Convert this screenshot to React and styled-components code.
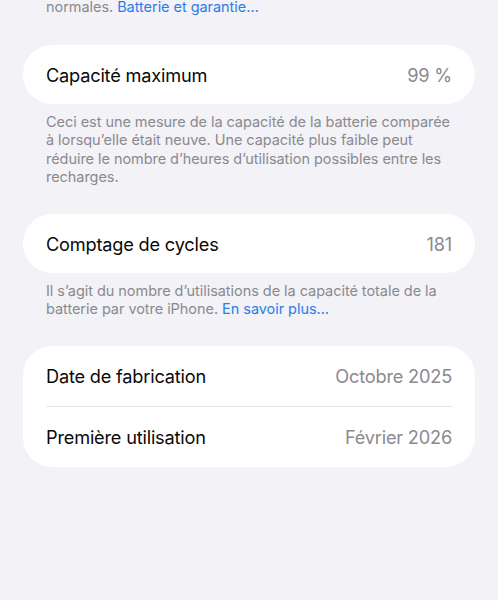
import React from "react"
import styled, { createGlobalStyle } from "styled-components"

const GlobalStyle = createGlobalStyle`
  html, body {
    margin: 0;
    padding: 0;
    background: #f2f2f7;
  }
  body {
    font-family: Inter, "Noto Sans", "Liberation Sans", sans-serif;
    -webkit-font-smoothing: antialiased;
  }
`

const Page = styled.div`
  display: flex;
  flex-direction: column;
  padding: 0 23px;
  height: 600px;
  overflow: hidden;
`

const Note = styled.p`
  margin: 0 0 ${p => (p.$top ? "29px" : "28px")};
  padding: ${p => (p.$top ? "0" : "9px")} 23px 0;
  margin-top: ${p => (p.$top ? "-2px" : "0")};
  font-size: 14.5px;
  line-height: 18.2px;
  color: #8a8a8e;
  letter-spacing: -0.05px;
`

const Link = styled.a`
  color: #2d7de8;
  text-decoration: none;
`

const Card = styled.div`
  background: #ffffff;
  border-radius: 29px;
  padding: 0 23px;
  display: flex;
  flex-direction: column;
`

const Row = styled.div`
  display: flex;
  align-items: center;
  justify-content: space-between;
  height: ${p => p.$h || 59}px;
  font-size: 18.2px;
  letter-spacing: -0.2px;
  & + & {
    border-top: 1px solid #e3e3e8;
  }
`

const Label = styled.span`
  color: #0a0a0a;
`

const Value = styled.span`
  color: #8a8a8e;
`

export default function App() {
  return (
    <>
      <GlobalStyle />
      <Page>
        <Note $top>
          normales. <Link>Batterie et garantie…</Link>
        </Note>
        <Card>
          <Row>
            <Label>Capacité maximum</Label>
            <Value>99 %</Value>
          </Row>
        </Card>
        <Note>
          Ceci est une mesure de la capacité de la batterie comparée à
          lorsqu’elle était neuve. Une capacité plus faible peut réduire le
          nombre d’heures d’utilisation possibles entre les recharges.
        </Note>
        <Card>
          <Row>
            <Label>Comptage de cycles</Label>
            <Value>181</Value>
          </Row>
        </Card>
        <Note>
          Il s’agit du nombre d’utilisations de la capacité totale de la
          batterie par votre iPhone. <Link>En savoir plus…</Link>
        </Note>
        <Card>
          <Row $h={60}>
            <Label>Date de fabrication</Label>
            <Value>Octobre 2025</Value>
          </Row>
          <Row $h={60}>
            <Label>Première utilisation</Label>
            <Value>Février 2026</Value>
          </Row>
        </Card>
      </Page>
    </>
  )
}
